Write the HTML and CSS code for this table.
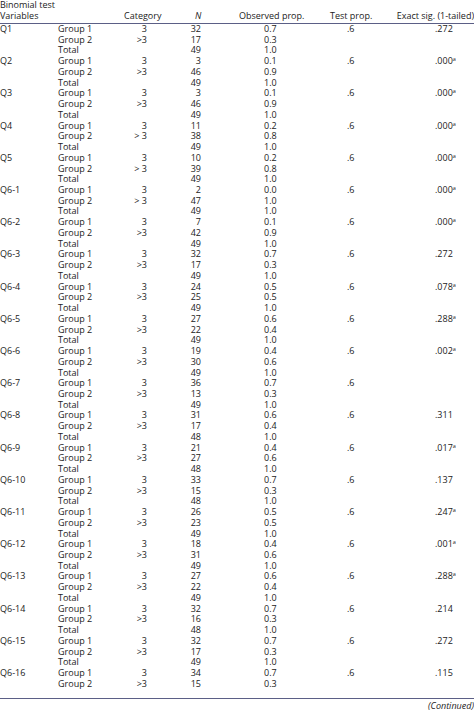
FILE: index.html
```html
<!DOCTYPE html>
<html>
<head>
<meta charset="utf-8">
<link rel="stylesheet" href="styles.css">
</head>
<body>
<table class="tbl">
<colgroup>
<col class="c-var"><col class="c-grp"><col class="c-cat"><col class="c-n"><col class="c-obs"><col class="c-test"><col class="c-sig">
</colgroup>
<thead>
<tr class="title"><th colspan="7">Binomial test</th></tr>
<tr class="head">
<th class="h-var">Variables</th><th></th><th class="h-cat">Category</th><th class="h-n"><i>N</i></th><th class="h-obs">Observed prop.</th><th class="h-test">Test prop.</th><th class="h-sig">Exact sig. (1-tailed)</th>
</tr>
</thead>
<tbody>
<tr><td>Q1</td><td>Group 1</td><td class="cat">3</td><td class="n">32</td><td class="obs">0.7</td><td class="test">.6</td><td class="sig">.272</td></tr>
<tr><td></td><td>Group 2</td><td class="cat">&gt;3</td><td class="n">17</td><td class="obs">0.3</td><td></td><td></td></tr>
<tr><td></td><td>Total</td><td></td><td class="n">49</td><td class="obs">1.0</td><td></td><td></td></tr>

<tr><td>Q2</td><td>Group 1</td><td class="cat">3</td><td class="n">3</td><td class="obs">0.1</td><td class="test">.6</td><td class="sig">.000<sup>a</sup></td></tr>
<tr><td></td><td>Group 2</td><td class="cat">&gt;3</td><td class="n">46</td><td class="obs">0.9</td><td></td><td></td></tr>
<tr><td></td><td>Total</td><td></td><td class="n">49</td><td class="obs">1.0</td><td></td><td></td></tr>

<tr><td>Q3</td><td>Group 1</td><td class="cat">3</td><td class="n">3</td><td class="obs">0.1</td><td class="test">.6</td><td class="sig">.000<sup>a</sup></td></tr>
<tr><td></td><td>Group 2</td><td class="cat">&gt;3</td><td class="n">46</td><td class="obs">0.9</td><td></td><td></td></tr>
<tr><td></td><td>Total</td><td></td><td class="n">49</td><td class="obs">1.0</td><td></td><td></td></tr>

<tr><td>Q4</td><td>Group 1</td><td class="cat">3</td><td class="n">11</td><td class="obs">0.2</td><td class="test">.6</td><td class="sig">.000<sup>a</sup></td></tr>
<tr><td></td><td>Group 2</td><td class="cat">&gt; 3</td><td class="n">38</td><td class="obs">0.8</td><td></td><td></td></tr>
<tr><td></td><td>Total</td><td></td><td class="n">49</td><td class="obs">1.0</td><td></td><td></td></tr>

<tr><td>Q5</td><td>Group 1</td><td class="cat">3</td><td class="n">10</td><td class="obs">0.2</td><td class="test">.6</td><td class="sig">.000<sup>a</sup></td></tr>
<tr><td></td><td>Group 2</td><td class="cat">&gt; 3</td><td class="n">39</td><td class="obs">0.8</td><td></td><td></td></tr>
<tr><td></td><td>Total</td><td></td><td class="n">49</td><td class="obs">1.0</td><td></td><td></td></tr>

<tr><td>Q6-1</td><td>Group 1</td><td class="cat">3</td><td class="n">2</td><td class="obs">0.0</td><td class="test">.6</td><td class="sig">.000<sup>a</sup></td></tr>
<tr><td></td><td>Group 2</td><td class="cat">&gt; 3</td><td class="n">47</td><td class="obs">1.0</td><td></td><td></td></tr>
<tr><td></td><td>Total</td><td></td><td class="n">49</td><td class="obs">1.0</td><td></td><td></td></tr>

<tr><td>Q6-2</td><td>Group 1</td><td class="cat">3</td><td class="n">7</td><td class="obs">0.1</td><td class="test">.6</td><td class="sig">.000<sup>a</sup></td></tr>
<tr><td></td><td>Group 2</td><td class="cat">&gt;3</td><td class="n">42</td><td class="obs">0.9</td><td></td><td></td></tr>
<tr><td></td><td>Total</td><td></td><td class="n">49</td><td class="obs">1.0</td><td></td><td></td></tr>

<tr><td>Q6-3</td><td>Group 1</td><td class="cat">3</td><td class="n">32</td><td class="obs">0.7</td><td class="test">.6</td><td class="sig">.272</td></tr>
<tr><td></td><td>Group 2</td><td class="cat">&gt;3</td><td class="n">17</td><td class="obs">0.3</td><td></td><td></td></tr>
<tr><td></td><td>Total</td><td></td><td class="n">49</td><td class="obs">1.0</td><td></td><td></td></tr>

<tr><td>Q6-4</td><td>Group 1</td><td class="cat">3</td><td class="n">24</td><td class="obs">0.5</td><td class="test">.6</td><td class="sig">.078<sup>a</sup></td></tr>
<tr><td></td><td>Group 2</td><td class="cat">&gt;3</td><td class="n">25</td><td class="obs">0.5</td><td></td><td></td></tr>
<tr><td></td><td>Total</td><td></td><td class="n">49</td><td class="obs">1.0</td><td></td><td></td></tr>

<tr><td>Q6-5</td><td>Group 1</td><td class="cat">3</td><td class="n">27</td><td class="obs">0.6</td><td class="test">.6</td><td class="sig">.288<sup>a</sup></td></tr>
<tr><td></td><td>Group 2</td><td class="cat">&gt;3</td><td class="n">22</td><td class="obs">0.4</td><td></td><td></td></tr>
<tr><td></td><td>Total</td><td></td><td class="n">49</td><td class="obs">1.0</td><td></td><td></td></tr>

<tr><td>Q6-6</td><td>Group 1</td><td class="cat">3</td><td class="n">19</td><td class="obs">0.4</td><td class="test">.6</td><td class="sig">.002<sup>a</sup></td></tr>
<tr><td></td><td>Group 2</td><td class="cat">&gt;3</td><td class="n">30</td><td class="obs">0.6</td><td></td><td></td></tr>
<tr><td></td><td>Total</td><td></td><td class="n">49</td><td class="obs">1.0</td><td></td><td></td></tr>

<tr><td>Q6-7</td><td>Group 1</td><td class="cat">3</td><td class="n">36</td><td class="obs">0.7</td><td class="test">.6</td><td></td></tr>
<tr><td></td><td>Group 2</td><td class="cat">&gt;3</td><td class="n">13</td><td class="obs">0.3</td><td></td><td></td></tr>
<tr><td></td><td>Total</td><td></td><td class="n">49</td><td class="obs">1.0</td><td></td><td></td></tr>

<tr><td>Q6-8</td><td>Group 1</td><td class="cat">3</td><td class="n">31</td><td class="obs">0.6</td><td class="test">.6</td><td class="sig">.311</td></tr>
<tr><td></td><td>Group 2</td><td class="cat">&gt;3</td><td class="n">17</td><td class="obs">0.4</td><td></td><td></td></tr>
<tr><td></td><td>Total</td><td></td><td class="n">48</td><td class="obs">1.0</td><td></td><td></td></tr>

<tr><td>Q6-9</td><td>Group 1</td><td class="cat">3</td><td class="n">21</td><td class="obs">0.4</td><td class="test">.6</td><td class="sig">.017<sup>a</sup></td></tr>
<tr><td></td><td>Group 2</td><td class="cat">&gt;3</td><td class="n">27</td><td class="obs">0.6</td><td></td><td></td></tr>
<tr><td></td><td>Total</td><td></td><td class="n">48</td><td class="obs">1.0</td><td></td><td></td></tr>

<tr><td>Q6-10</td><td>Group 1</td><td class="cat">3</td><td class="n">33</td><td class="obs">0.7</td><td class="test">.6</td><td class="sig">.137</td></tr>
<tr><td></td><td>Group 2</td><td class="cat">&gt;3</td><td class="n">15</td><td class="obs">0.3</td><td></td><td></td></tr>
<tr><td></td><td>Total</td><td></td><td class="n">48</td><td class="obs">1.0</td><td></td><td></td></tr>

<tr><td>Q6-11</td><td>Group 1</td><td class="cat">3</td><td class="n">26</td><td class="obs">0.5</td><td class="test">.6</td><td class="sig">.247<sup>a</sup></td></tr>
<tr><td></td><td>Group 2</td><td class="cat">&gt;3</td><td class="n">23</td><td class="obs">0.5</td><td></td><td></td></tr>
<tr><td></td><td>Total</td><td></td><td class="n">49</td><td class="obs">1.0</td><td></td><td></td></tr>

<tr><td>Q6-12</td><td>Group 1</td><td class="cat">3</td><td class="n">18</td><td class="obs">0.4</td><td class="test">.6</td><td class="sig">.001<sup>a</sup></td></tr>
<tr><td></td><td>Group 2</td><td class="cat">&gt;3</td><td class="n">31</td><td class="obs">0.6</td><td></td><td></td></tr>
<tr><td></td><td>Total</td><td></td><td class="n">49</td><td class="obs">1.0</td><td></td><td></td></tr>

<tr><td>Q6-13</td><td>Group 1</td><td class="cat">3</td><td class="n">27</td><td class="obs">0.6</td><td class="test">.6</td><td class="sig">.288<sup>a</sup></td></tr>
<tr><td></td><td>Group 2</td><td class="cat">&gt;3</td><td class="n">22</td><td class="obs">0.4</td><td></td><td></td></tr>
<tr><td></td><td>Total</td><td></td><td class="n">49</td><td class="obs">1.0</td><td></td><td></td></tr>

<tr><td>Q6-14</td><td>Group 1</td><td class="cat">3</td><td class="n">32</td><td class="obs">0.7</td><td class="test">.6</td><td class="sig">.214</td></tr>
<tr><td></td><td>Group 2</td><td class="cat">&gt;3</td><td class="n">16</td><td class="obs">0.3</td><td></td><td></td></tr>
<tr><td></td><td>Total</td><td></td><td class="n">48</td><td class="obs">1.0</td><td></td><td></td></tr>

<tr><td>Q6-15</td><td>Group 1</td><td class="cat">3</td><td class="n">32</td><td class="obs">0.7</td><td class="test">.6</td><td class="sig">.272</td></tr>
<tr><td></td><td>Group 2</td><td class="cat">&gt;3</td><td class="n">17</td><td class="obs">0.3</td><td></td><td></td></tr>
<tr><td></td><td>Total</td><td></td><td class="n">49</td><td class="obs">1.0</td><td></td><td></td></tr>

<tr><td>Q6-16</td><td>Group 1</td><td class="cat">3</td><td class="n">34</td><td class="obs">0.7</td><td class="test">.6</td><td class="sig">.115</td></tr>
<tr class="last"><td></td><td>Group 2</td><td class="cat">&gt;3</td><td class="n">15</td><td class="obs">0.3</td><td></td><td></td></tr>
</tbody>
</table>
<div class="continued"><i>(Continued)</i></div>
</body>
</html>
```
FILE: styles.css
```css
html, body {
  margin: 0;
  padding: 0;
  background: #fff;
}
body {
  font-family: "Open Sans", "Noto Sans", sans-serif;
  font-size: 9px;
  color: #222;
  width: 474px;
  overflow: hidden;
}
.tbl {
  width: 474px;
  table-layout: fixed;
  border-collapse: collapse;
  margin-top: -1px;
}
.c-var { width: 58px; }
.c-grp { width: 60px; }
.c-cat { width: 47px; }
.c-n { width: 50px; }
.c-obs { width: 105px; }
.c-test { width: 75px; }
.c-sig { width: 79px; }

.tbl th, .tbl td {
  padding: 0;
  line-height: 10.74px;
  font-weight: normal;
  text-align: left;
  white-space: nowrap;
  vertical-align: middle;
}
.title th { line-height: 11px; }
.head th {
  line-height: 11px;
  padding-bottom: 1.5px;
  border-bottom: 1px solid #5b5f86;
}
.head .h-cat { padding-left: 6px; }
.head .h-n { padding-left: 30px; }
.head .h-obs { padding-left: 24px; }
.head .h-test { padding-left: 10px; }
.head .h-sig { text-align: right; }

tbody tr:first-child td { padding-top: 0.5px; }
tbody tr.last td {
  padding-bottom: 8px;
  border-bottom: 1.5px solid #5b5f86;
}
.cat { text-align: right !important; padding-right: 18px !important; }
.n { text-align: right !important; padding-right: 14px !important; }
.obs { padding-left: 49px !important; }
.test { padding-left: 27px !important; }
.sig { padding-left: 40px !important; }
sup {
  font-size: 5.5px;
  line-height: 0;
  vertical-align: 3px;
}
.continued {
  text-align: right;
  line-height: 11px;
  margin-top: 1px;
}
```
